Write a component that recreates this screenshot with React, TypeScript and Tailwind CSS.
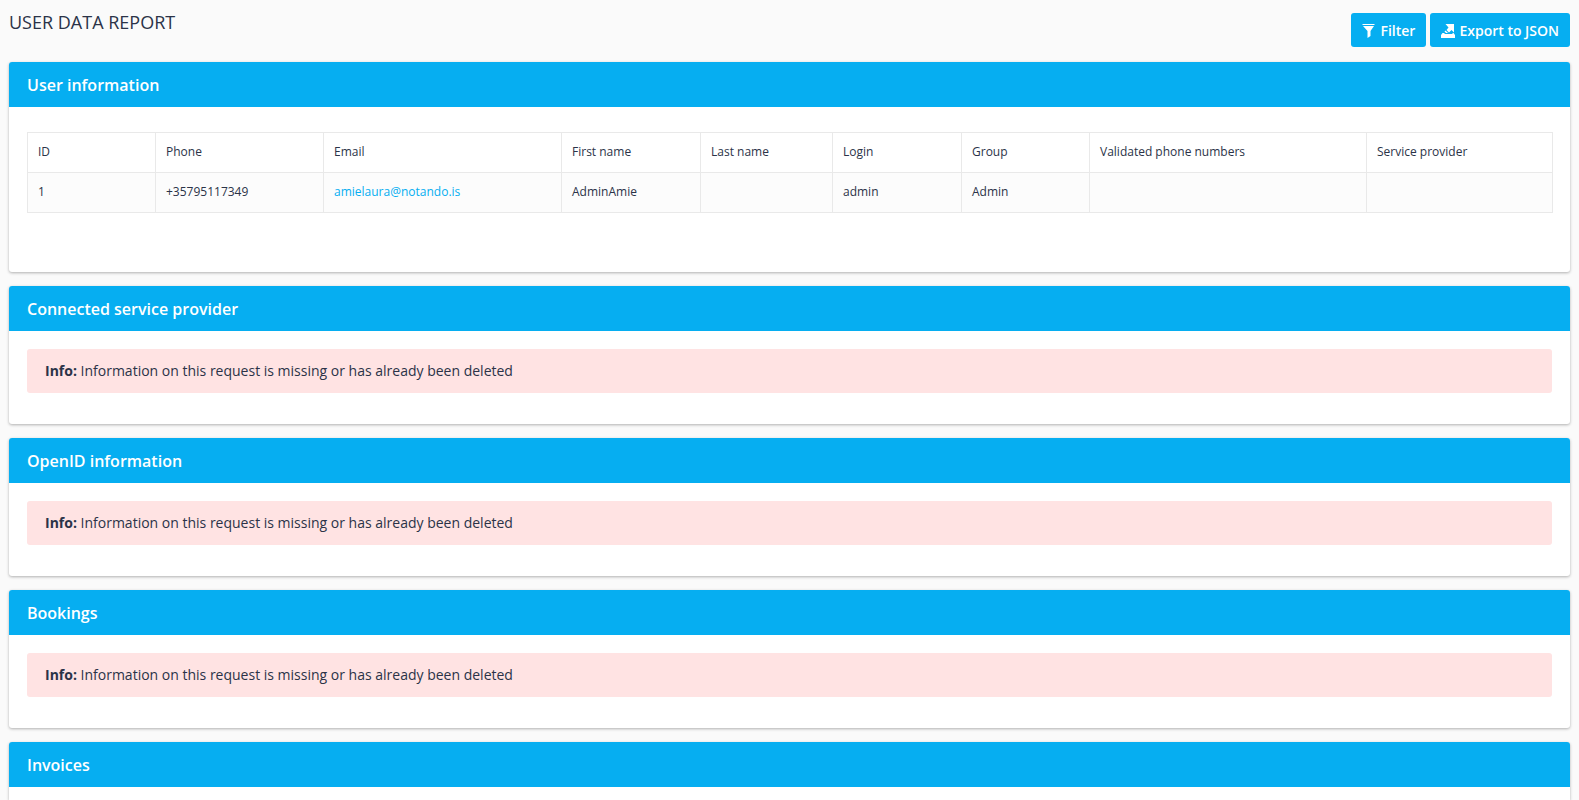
import type { ReactNode } from "react";

const columns = [
  { title: "ID", width: "w-[128px]" },
  { title: "Phone", width: "w-[168px]" },
  { title: "Email", width: "w-[238px]" },
  { title: "First name", width: "w-[139px]" },
  { title: "Last name", width: "w-[132px]" },
  { title: "Login", width: "w-[129px]" },
  { title: "Group", width: "w-[128px]" },
  { title: "Validated phone numbers", width: "w-[277px]" },
  { title: "Service provider", width: "w-[186px]" },
];

const emptySections = ["Connected service provider", "OpenID information", "Bookings"];

function FilterIcon() {
  return (
    <svg viewBox="0 0 14 14" className="h-3.5 w-3.5" fill="currentColor" aria-hidden="true">
      <path d="M.5 0h12v1H.5z" />
      <path d="M1 2h11L8.500 7v5L5.500 14V7z" />
    </svg>
  );
}

function ExportIcon() {
  return (
    <svg viewBox="0 0 14 14" className="h-3.5 w-3.5" fill="currentColor" aria-hidden="true">
      <path d="M4.500 0H13v8.500L10.500 6 8 8.500 5.500 6 7.500 3.500z" />
      <path d="M4.500 6.500 7 9H5L3.500 7.500z" />
      <path d="M1.500 9H3l1 1h7l1-1h.5L14 11v3H0v-3z" />
    </svg>
  );
}

function ActionButton({ icon, children }: { icon: ReactNode; children: ReactNode }) {
  return (
    <button
      type="button"
      className="flex h-[34px] items-center gap-1 rounded-[3px] bg-[#06aef1] px-[11px] pt-0.5 text-sm font-semibold text-white"
    >
      {icon}
      {children}
    </button>
  );
}

function Panel({ title, className = "rounded-[3px]", children }: { title: string; className?: string; children?: ReactNode }) {
  return (
    <section className={`bg-white shadow-[0_1px_3px_rgba(0,0,0,0.3)] ${className}`}>
      <h2 className="flex h-[45px] items-center rounded-t-[3px] bg-[#06aef1] px-[18px] text-base font-semibold text-white">
        {title}
      </h2>
      {children}
    </section>
  );
}

function UserTable() {
  return (
    <table className="w-full table-fixed border-collapse text-xs leading-[19px] [&_td]:border [&_td]:border-[#e9e9e9] [&_td]:px-2.5 [&_td]:pt-[9px] [&_td]:pb-[11px] [&_th]:border [&_th]:border-[#e9e9e9] [&_th]:px-2.5 [&_th]:pt-[9px] [&_th]:pb-[11px]">
      <colgroup>
        {columns.map((column) => (
          <col key={column.title} className={column.width} />
        ))}
      </colgroup>
      <thead>
        <tr>
          {columns.map((column) => (
            <th key={column.title} scope="col" className="text-left font-medium">
              {column.title}
            </th>
          ))}
        </tr>
      </thead>
      <tbody>
        <tr className="bg-[#fcfcfc]">
          <td>1</td>
          <td>+35795117349</td>
          <td>
            <a href="mailto:amielaura@notando.is" className="text-[#06aef1]">
              amielaura@notando.is
            </a>
          </td>
          <td>AdminAmie</td>
          <td />
          <td>admin</td>
          <td>Admin</td>
          <td />
          <td />
        </tr>
      </tbody>
    </table>
  );
}

export default function App() {
  return (
    <main className="flex min-h-screen flex-col bg-[#fafafa] px-[9px] font-['Open_Sans',sans-serif] text-[#2b3348]">
      <header className="flex items-start justify-between pt-[13px] pb-[15px]">
        <h1 className="text-lg leading-[18px] font-medium">USER DATA REPORT</h1>
        <div className="flex gap-1">
          <ActionButton icon={<FilterIcon />}>Filter</ActionButton>
          <ActionButton icon={<ExportIcon />}>Export to JSON</ActionButton>
        </div>
      </header>

      <div className="flex flex-1 flex-col gap-3.5">
        <Panel title="User information">
          <div className="px-[18px] pt-[25px] pb-[59px]">
            <UserTable />
          </div>
        </Panel>

        {emptySections.map((title) => (
          <Panel key={title} title={title}>
            <div className="px-[18px] pt-[18px] pb-[31px]">
              <p className="rounded-[3px] bg-[#ffe3e3] px-[18px] py-3 text-sm leading-5">
                <strong className="font-bold">Info:</strong> Information on this request is missing or has already been
                deleted
              </p>
            </div>
          </Panel>
        ))}

        <Panel title="Invoices" className="flex-1 rounded-t-[3px]" />
      </div>
    </main>
  );
}
